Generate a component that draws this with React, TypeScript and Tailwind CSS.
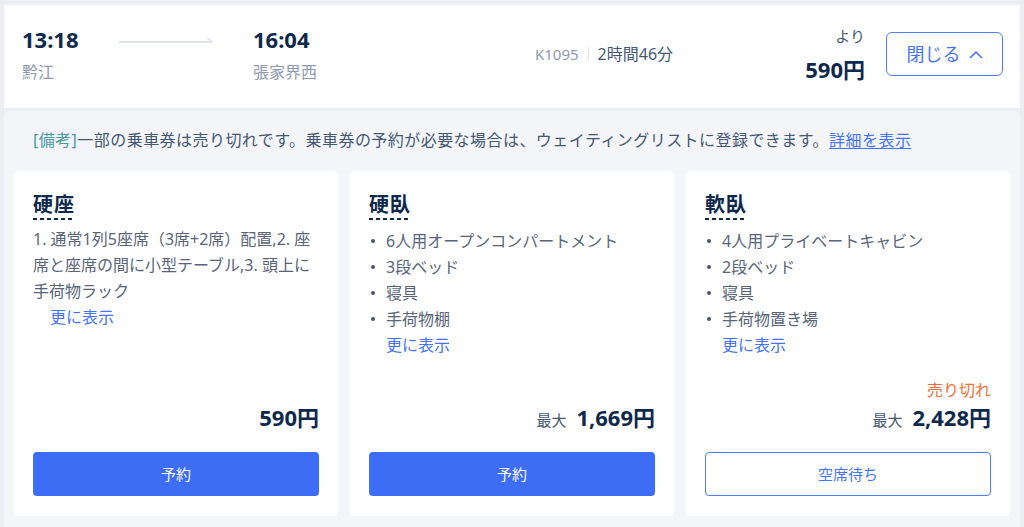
import React from "react";

const FONT = { fontFamily: '"Noto Sans", "Noto Sans CJK JP", sans-serif' };

function Arrow() {
  return (
    <svg width="94" height="10" viewBox="0 0 94 10" className="block">
      <path d="M0 7 H93 L88 3" fill="none" stroke="#dfe3ea" strokeWidth="2" strokeLinejoin="round" />
    </svg>
  );
}

function Bullets({ items }: { items: string[] }) {
  return (
    <ul className="mt-[8px]">
      {items.map((t) => (
        <li key={t} className="flex items-center text-[16px] leading-[26px] text-[#586579]">
          <span className="ml-[2px] mr-[11px] w-[4px] h-[4px] rounded-full bg-[#4a576c] shrink-0" />
          {t}
        </li>
      ))}
    </ul>
  );
}

function Title({ children }: { children: React.ReactNode }) {
  return (
    <div className="self-start text-[20px] leading-[27px] font-bold text-[#0f294d] tracking-[1px]">
      {children}
      <div className="h-[2px] bg-[repeating-linear-gradient(90deg,#0f294d_0px,#0f294d_4px,transparent_4px,transparent_7px)]" />
    </div>
  );
}

function Price({ max, value, soldOut }: { max?: boolean; value: string; soldOut?: boolean }) {
  return (
    <div className="mt-auto flex flex-col items-end">
      {soldOut && <div className="text-[16px] leading-[24px] text-[#f0703a]">売り切れ</div>}
      <div className="flex items-baseline">
        {max && <span className="text-[15px] text-[#455873] mr-[10px]">最大</span>}
        <span className="text-[22px] leading-[30px] font-bold text-[#0f294d]">{value}</span>
      </div>
    </div>
  );
}

export default function App() {
  return (
    <div style={FONT} className="w-[1024px] h-[527px] overflow-hidden bg-[#eceef2] pt-[5px] px-[4px]">
      {/* Header */}
      <div className="bg-white h-[103px] flex items-start pl-[18px] pr-[17px]">
        <div className="w-[97px] pt-[19px]">
          <div className="text-[22px] leading-[30px] font-bold text-[#0f294d]">13:18</div>
          <div className="mt-[6px] text-[16px] leading-[24px] text-[#8f9ab0]">黔江</div>
        </div>
        <div className="pt-[30px] w-[134px]">
          <Arrow />
        </div>
        <div className="w-[282px] pt-[19px]">
          <div className="text-[22px] leading-[30px] font-bold text-[#0f294d]">16:04</div>
          <div className="mt-[6px] text-[16px] leading-[24px] text-[#8f9ab0]">張家界西</div>
        </div>
        <div className="pt-[37px] flex items-center">
          <span className="text-[15px] leading-[24px] text-[#8f9ab0]">K1095</span>
          <span className="mx-[9px] w-px h-[14px] bg-[#dfe3ea]" />
          <span className="text-[16px] leading-[24px] text-[#455873]">2時間46分</span>
        </div>
        <div className="flex-1" />
        <div className="pt-[20px] flex flex-col items-end">
          <div className="text-[15px] leading-[22px] text-[#455873]">より</div>
          <div className="mt-[7px] text-[22px] leading-[30px] font-bold text-[#0f294d]">590円</div>
        </div>
        <button className="ml-[21px] mt-[27px] w-[117px] h-[44px] rounded-[6px] border border-[#4f7cf7] text-[#4673f6] text-[18px] flex items-center justify-center gap-[8px]">
          閉じる
          <svg width="14" height="9" viewBox="0 0 14 9" fill="none">
            <path d="M1.5 7.5 L7 2 L12.5 7.5" stroke="#4673f6" strokeWidth="1.6" strokeLinecap="round" strokeLinejoin="round" />
          </svg>
        </button>
      </div>

      {/* Panel */}
      <div className="mt-[3px] bg-[#f4f5f9] rounded-t-[6px] px-[9px] pt-[17px] h-[420px]">
        <div className="ml-[20px] text-[16px] leading-[24px] text-[#455873] tracking-[0.45px]">
          <span className="text-[#4a98a6]">[備考]</span>
          一部の乗車券は売り切れです。乗車券の予約が必要な場合は、ウェイティングリストに登録できます。
          <span className="text-[#4673f6] underline underline-offset-2">詳細を表示</span>
        </div>

        <div className="mt-[19px] grid grid-cols-3 gap-[10px]">
          {/* Card 1 */}
          <div className="bg-white rounded-[6px] h-[345px] p-5 flex flex-col">
            <Title>硬座</Title>
            <div className="mt-[6px] text-[16px] leading-[26px] text-[#586579]">
              1. 通常1列5座席（3席+2席）配置,2. 座席と座席の間に小型テーブル,3. 頭上に手荷物ラック
            </div>
            <div className="ml-[17px] text-[16px] leading-[26px] text-[#4673f6]">更に表示</div>
            <Price value="590円" />
            <button className="mt-[20px] h-[44px] rounded-[4px] bg-[#3d6cf5] text-white text-[15px]">予約</button>
          </div>

          {/* Card 2 */}
          <div className="bg-white rounded-[6px] h-[345px] p-5 flex flex-col">
            <Title>硬臥</Title>
            <Bullets items={["6人用オープンコンパートメント", "3段ベッド", "寝具", "手荷物棚"]} />
            <div className="ml-[17px] text-[16px] leading-[26px] text-[#4673f6]">更に表示</div>
            <Price max value="1,669円" />
            <button className="mt-[20px] h-[44px] rounded-[4px] bg-[#3d6cf5] text-white text-[15px]">予約</button>
          </div>

          {/* Card 3 */}
          <div className="bg-white rounded-[6px] h-[345px] p-5 flex flex-col">
            <Title>軟臥</Title>
            <Bullets items={["4人用プライベートキャビン", "2段ベッド", "寝具", "手荷物置き場"]} />
            <div className="ml-[17px] text-[16px] leading-[26px] text-[#4673f6]">更に表示</div>
            <Price max soldOut value="2,428円" />
            <button className="mt-[20px] h-[44px] rounded-[4px] border border-[#4f7cf7] bg-white text-[#4673f6] text-[15px]">空席待ち</button>
          </div>
        </div>
      </div>
    </div>
  );
}
